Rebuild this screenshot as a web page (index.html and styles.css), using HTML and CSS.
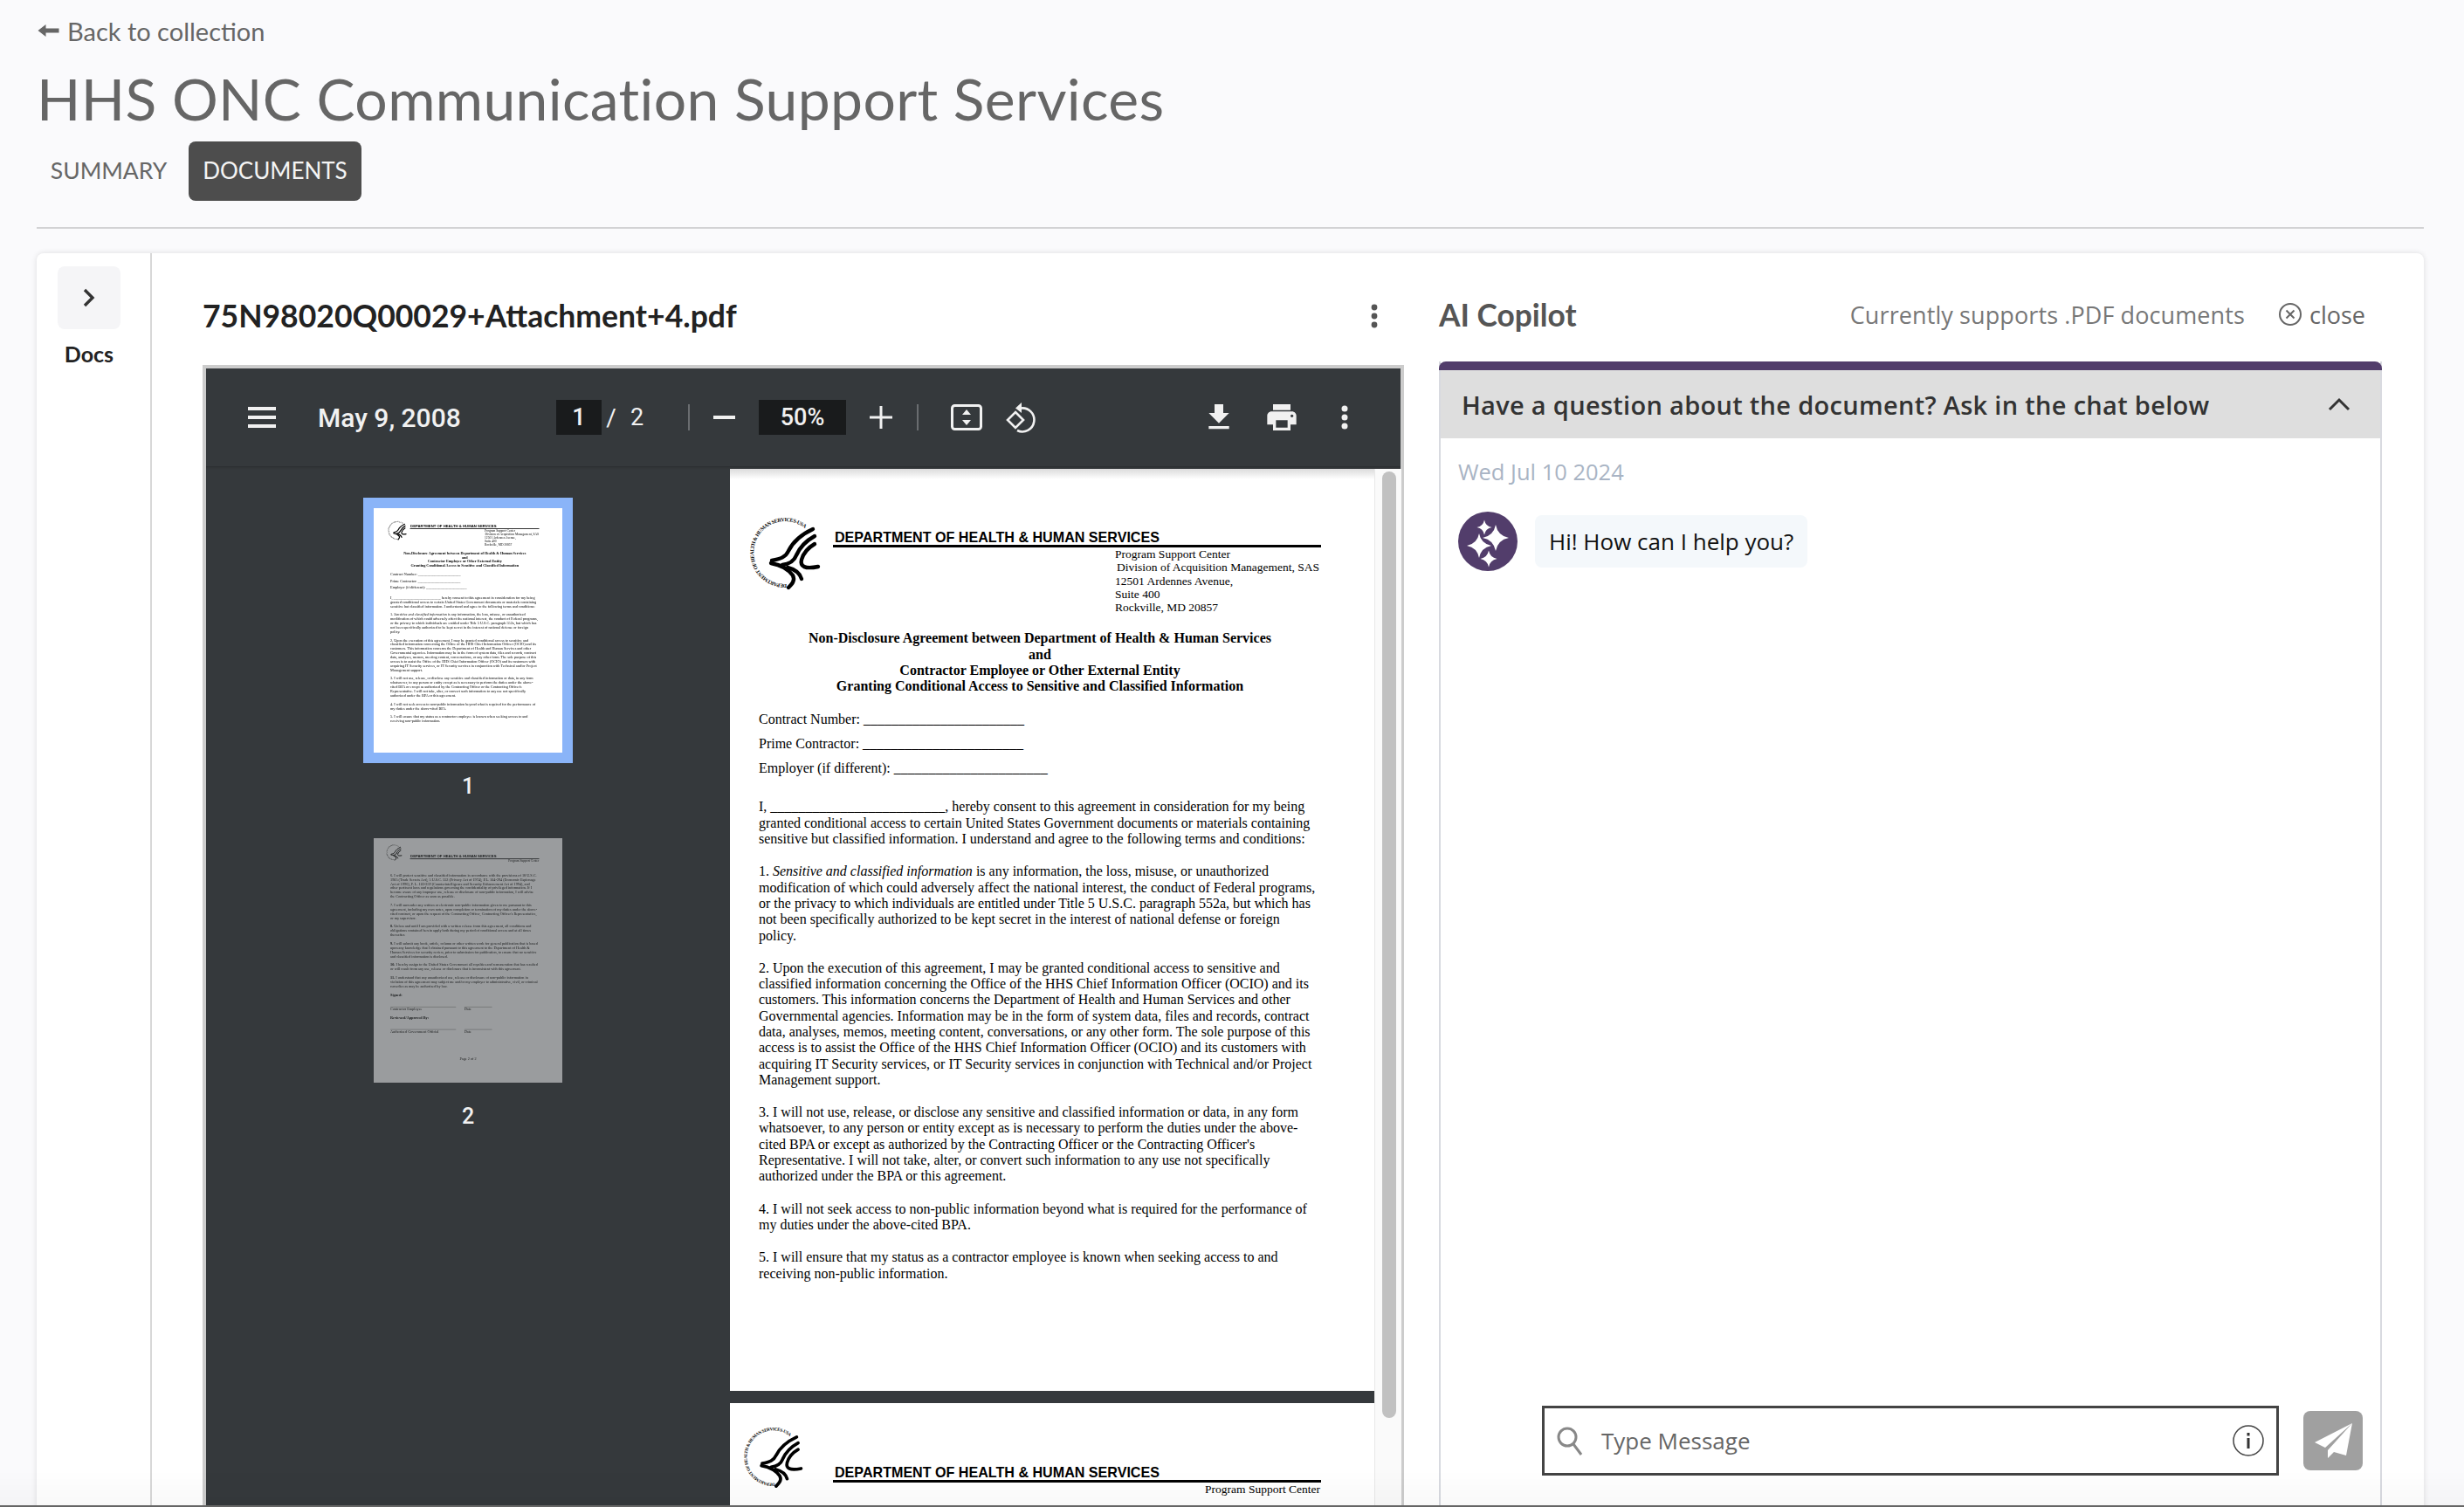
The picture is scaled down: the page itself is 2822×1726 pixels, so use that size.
FILE: index.html
```html
<!DOCTYPE html>
<html lang="en">
<head>
<meta charset="utf-8">
<title>HHS ONC Communication Support Services</title>
<link rel="stylesheet" href="styles.css">
</head>
<body>
<svg class="defs" width="0" height="0" aria-hidden="true">
  <defs>
    <symbol id="hhs" viewBox="0 0 100 100">
      <path id="hhs-ring" d="M55 89A36 36 0 1 1 77 26" fill="none"/>
      <text class="hhs-ring-text"><textPath href="#hhs-ring" textLength="139">DEPARTMENT OF HEALTH &amp; HUMAN SERVICES-USA</textPath></text>
      <g fill="none" stroke="#000" stroke-width="4.4" stroke-linecap="round">
        <path d="M85 26C72 32 62 41 57 51C54 58 48 60 38 62"/>
        <path d="M87 34C76 40 70 47 66 56C63 64 57 66 50 67"/>
        <path d="M87 43C80 47 74 54 72 61C70 69 76 72 91 69"/>
        <path d="M37 65C48 67 57 72 62 79C65 85 61 89 57 93"/>
        <path d="M56 70C64 72 70 76 72 83"/>
      </g>
    </symbol>
    <path id="star" d="M0-10Q1.6-1.6 10 0Q1.6 1.6 0 10Q-1.6 1.6-10 0Q-1.6-1.6 0-10Z" fill="#fff"/>
  </defs>
</svg>

<div class="page">
  <a class="back"><svg class="back-arrow" viewBox="0 0 24 16"><path d="M0 8L9 1V5.500H24V10.500H9V15Z" fill="#666"/></svg>Back to collection</a>
  <h1 class="title">HHS ONC Communication Support Services</h1>
  <nav class="tabs">
    <span class="tab">SUMMARY</span>
    <span class="tab tab-active">DOCUMENTS</span>
  </nav>
  <hr class="divider">

  <section class="card">
    <aside class="rail">
      <button class="rail-btn"><svg width="18" height="24" viewBox="0 0 18 24"><path d="M4 3L13 12L4 21" fill="none" stroke="#333" stroke-width="3.400"/></svg></button>
      <span class="rail-label">Docs</span>
    </aside>

    <div class="doc-col">
      <header class="doc-head">
        <span class="doc-name">75N98020Q00029+Attachment+4.pdf</span>
        <svg class="doc-more" width="8" height="28" viewBox="0 0 8 28"><circle cx="4" cy="4" r="3.4" fill="#555"/><circle cx="4" cy="14" r="3.4" fill="#555"/><circle cx="4" cy="24" r="3.4" fill="#555"/></svg>
      </header>

      <div class="viewer">
        <div class="toolbar">
          <svg class="tb-menu" width="32" height="24" viewBox="0 0 32 24"><path d="M0 0H32V4H0ZM0 10H32V14H0ZM0 20H32V24H0Z" fill="#f1f1f1"/></svg>
          <span class="tb-date">May 9, 2008</span>
          <span class="tb-box tb-pagebox">1</span>
          <span class="tb-slash">/</span>
          <span class="tb-total">2</span>
          <span class="tb-sep tb-sep-a"></span>
          <svg class="tb-minus" width="25" height="4" viewBox="0 0 25 4"><rect width="25" height="4" fill="#f1f1f1"/></svg>
          <span class="tb-box tb-zoombox">50%</span>
          <svg class="tb-plus" width="26" height="26" viewBox="0 0 26 26"><path d="M11.500 0H14.500V11.500H26V14.500H14.500V26H11.500V14.500H0V11.500H11.500Z" fill="#f1f1f1"/></svg>
          <span class="tb-sep tb-sep-b"></span>
          <svg class="tb-fit" width="36" height="30" viewBox="0 0 36 30"><rect x="1.500" y="1.500" width="33" height="27" rx="3" fill="none" stroke="#f1f1f1" stroke-width="3"/><path d="M18 6L23 12H13ZM18 24L13 18H23Z" fill="#f1f1f1"/></svg>
          <svg class="tb-rotate" width="36" height="36" viewBox="0 0 36 36"><path d="M11 12L20 21L11 30L2 21Z" fill="none" stroke="#f1f1f1" stroke-width="2.600"/><path d="M17 7.500A13.500 13.500 0 1 1 13 33" fill="none" stroke="#f1f1f1" stroke-width="2.600"/><path d="M18 1V13L11 7.500Z" fill="#f1f1f1"/></svg>
          <svg class="tb-dl" width="40" height="40" viewBox="0 0 24 24"><path d="M19 9h-4V3H9v6H5l7 7 7-7zM5 18v2h14v-2H5z" fill="#f1f1f1"/></svg>
          <svg class="tb-print" width="40" height="40" viewBox="0 0 24 24"><path d="M19 8H5c-1.660 0-3 1.340-3 3v6h4v4h12v-4h4v-6c0-1.660-1.340-3-3-3zm-3 11H8v-5h8v5zm3-7c-.550 0-1-.450-1-1s.450-1 1-1 1 .450 1 1-.450 1-1 1zm-1-9H6v4h12V3z" fill="#f1f1f1"/></svg>
          <svg class="tb-more" width="8" height="28" viewBox="0 0 8 28"><circle cx="4" cy="4" r="3.500" fill="#f1f1f1"/><circle cx="4" cy="14" r="3.500" fill="#f1f1f1"/><circle cx="4" cy="24" r="3.500" fill="#f1f1f1"/></svg>
        </div>

        <div class="viewer-body">
          <div class="thumbs">
            <div class="thumb thumb-selected">
              <div class="thumb-paper">
                <div class="thumb-scale">
                  <div class="sheet">
                    <div class="letterhead">
                      <svg class="hhs-logo"><use href="#hhs"/></svg>
                      <div class="dept">DEPARTMENT OF HEALTH &amp; HUMAN SERVICES</div>
                    </div>
                    <div class="address">Program Support Center<br><span class="address-indent">Division of Acquisition Management, SAS</span><br>12501 Ardennes Avenue,<br>Suite 400<br>Rockville, MD 20857</div>
                    <div class="agreement">Non-Disclosure Agreement between Department of Health &amp; Human Services<br>and<br>Contractor Employee or Other External Entity<br>Granting Conditional Access to Sensitive and Classified Information</div>
                    <div class="fields">Contract Number: _______________________<br>Prime Contractor: _______________________<br>Employer (if different): ______________________</div>
                    <p class="para para-first">I, _________________________, hereby consent to this agreement in consideration for my being<br>granted conditional access to certain United States Government documents or materials containing<br>sensitive but classified information. I understand and agree to the following terms and conditions:</p>
                    <p class="para">1. <i>Sensitive and classified information</i> is any information, the loss, misuse, or unauthorized<br>modification of which could adversely affect the national interest, the conduct of Federal programs,<br>or the privacy to which individuals are entitled under Title 5 U.S.C. paragraph 552a, but which has<br>not been specifically authorized to be kept secret in the interest of national defense or foreign<br>policy.</p>
                    <p class="para">2. Upon the execution of this agreement, I may be granted conditional access to sensitive and<br>classified information concerning the Office of the HHS Chief Information Officer (OCIO) and its<br>customers. This information concerns the Department of Health and Human Services and other<br>Governmental agencies. Information may be in the form of system data, files and records, contract<br>data, analyses, memos, meeting content, conversations, or any other form. The sole purpose of this<br>access is to assist the Office of the HHS Chief Information Officer (OCIO) and its customers with<br>acquiring IT Security services, or IT Security services in conjunction with Technical and/or Project<br>Management support.</p>
                    <p class="para">3. I will not use, release, or disclose any sensitive and classified information or data, in any form<br>whatsoever, to any person or entity except as is necessary to perform the duties under the above-<br>cited BPA or except as authorized by the Contracting Officer or the Contracting Officer's<br>Representative. I will not take, alter, or convert such information to any use not specifically<br>authorized under the BPA or this agreement.</p>
                    <p class="para">4. I will not seek access to non-public information beyond what is required for the performance of<br>my duties under the above-cited BPA.</p>
                    <p class="para">5. I will ensure that my status as a contractor employee is known when seeking access to and<br>receiving non-public information.</p>
                  </div>
                </div>
              </div>
            </div>
            <div class="thumb-label">1</div>
            <div class="thumb thumb-dim">
              <div class="thumb-paper">
                <div class="thumb-scale">
                  <div class="sheet">
                    <div class="letterhead letterhead-two">
                      <svg class="hhs-logo hhs-logo-two"><use href="#hhs"/></svg>
                      <div class="dept">DEPARTMENT OF HEALTH &amp; HUMAN SERVICES</div>
                    </div>
                    <div class="psc-right">Program Support Center</div>
                    <p class="para para-six">6. I will protect sensitive and classified information in accordance with the provisions of 18 U.S.C.<br>1905 (Trade Secrets Act), 5 U.S.C. 552 (Privacy Act of 1974), P.L. 104-294 (Economic Espionage<br>Act of 1996), P. L. 103-359 (Counterintelligence and Security Enhancement Act of 1994), and<br>other pertinent laws and regulations governing the confidentiality of privileged information. If I<br>become aware of any improper use, release or disclosure of non-public information, I will advise<br>the Contracting Officer as soon as possible.</p>
                    <p class="para">7. I will surrender any written or electronic non-public information given to me pursuant to this<br>agreement, including my own notes, upon completion or termination of my duties under the above-<br>cited contract, or upon the request of the Contracting Officer, Contracting Officer's Representative,<br>or my supervisor.</p>
                    <p class="para"><b>8.</b> Unless and until I am provided with a written release from this agreement, all conditions and<br>obligations contained herein apply both during my period of conditional access and at all times<br>thereafter.</p>
                    <p class="para"><b>9.</b> I will submit any book, article, column or other written work for general publication that is based<br>upon any knowledge that I obtained pursuant to this agreement to the Department of Health &amp;<br>Human Services for security review, prior to submission for publication, to ensure that no sensitive<br>and classified information is disclosed.</p>
                    <p class="para"><b>10.</b> I hereby assign to the United States Government all royalties and remuneration that has resulted<br>or will result from any use, release or disclosure that is inconsistent with this agreement.</p>
                    <p class="para"><b>11.</b> I understand that any unauthorized use, release or disclosure of non-public information in<br>violation of this agreement may subject me and/or my employer to administrative, civil, or criminal<br>remedies as may be authorized by law.</p>
                    <p class="para"><b>Signed:</b></p>
                    <div class="sign-row"><span class="sign-name">Contractor Employee</span><span class="sign-date">Date</span></div>
                    <p class="para"><b>Reviewed/Approved By:</b></p>
                    <div class="sign-row"><span class="sign-name">Authorized Government Official</span><span class="sign-date">Date</span></div>
                    <div class="page-no">Page 2 of 2</div>
                  </div>
                </div>
              </div>
            </div>
            <div class="thumb-label">2</div>
          </div>

          <div class="pages">
            <div class="pages-scroll">
              <div class="sheet sheet-main">
                <div class="letterhead">
                  <svg class="hhs-logo"><use href="#hhs"/></svg>
                  <div class="dept">DEPARTMENT OF HEALTH &amp; HUMAN SERVICES</div>
                </div>
                <div class="address">Program Support Center<br><span class="address-indent">Division of Acquisition Management, SAS</span><br>12501 Ardennes Avenue,<br>Suite 400<br>Rockville, MD 20857</div>
                <div class="agreement">Non-Disclosure Agreement between Department of Health &amp; Human Services<br>and<br>Contractor Employee or Other External Entity<br>Granting Conditional Access to Sensitive and Classified Information</div>
                <div class="fields">Contract Number: _______________________<br>Prime Contractor: _______________________<br>Employer (if different): ______________________</div>
                <p class="para para-first">I, _________________________, hereby consent to this agreement in consideration for my being<br>granted conditional access to certain United States Government documents or materials containing<br>sensitive but classified information. I understand and agree to the following terms and conditions:</p>
                <p class="para">1. <i>Sensitive and classified information</i> is any information, the loss, misuse, or unauthorized<br>modification of which could adversely affect the national interest, the conduct of Federal programs,<br>or the privacy to which individuals are entitled under Title 5 U.S.C. paragraph 552a, but which has<br>not been specifically authorized to be kept secret in the interest of national defense or foreign<br>policy.</p>
                <p class="para">2. Upon the execution of this agreement, I may be granted conditional access to sensitive and<br>classified information concerning the Office of the HHS Chief Information Officer (OCIO) and its<br>customers. This information concerns the Department of Health and Human Services and other<br>Governmental agencies. Information may be in the form of system data, files and records, contract<br>data, analyses, memos, meeting content, conversations, or any other form. The sole purpose of this<br>access is to assist the Office of the HHS Chief Information Officer (OCIO) and its customers with<br>acquiring IT Security services, or IT Security services in conjunction with Technical and/or Project<br>Management support.</p>
                <p class="para">3. I will not use, release, or disclose any sensitive and classified information or data, in any form<br>whatsoever, to any person or entity except as is necessary to perform the duties under the above-<br>cited BPA or except as authorized by the Contracting Officer or the Contracting Officer's<br>Representative. I will not take, alter, or convert such information to any use not specifically<br>authorized under the BPA or this agreement.</p>
                <p class="para">4. I will not seek access to non-public information beyond what is required for the performance of<br>my duties under the above-cited BPA.</p>
                <p class="para">5. I will ensure that my status as a contractor employee is known when seeking access to and<br>receiving non-public information.</p>
              </div>
              <div class="sheet sheet-main sheet-next">
                <div class="letterhead letterhead-two">
                  <svg class="hhs-logo hhs-logo-two"><use href="#hhs"/></svg>
                  <div class="dept">DEPARTMENT OF HEALTH &amp; HUMAN SERVICES</div>
                </div>
                <div class="psc-right">Program Support Center</div>
              </div>
            </div>
            <div class="gutter"><div class="gutter-thumb"></div></div>
          </div>
        </div>
      </div>
    </div>

    <div class="chat-col">
      <header class="chat-head">
        <span class="chat-title">AI Copilot</span>
        <span class="chat-note">Currently supports .PDF documents</span>
        <span class="chat-close"><svg width="28" height="28" viewBox="0 0 28 28"><circle cx="14" cy="14" r="12" fill="none" stroke="#666" stroke-width="2"/><path d="M9.500 9.500L18.500 18.500M18.500 9.500L9.500 18.500" stroke="#666" stroke-width="2"/></svg>close</span>
      </header>
      <div class="chat-panel">
        <div class="chat-bar"></div>
        <div class="chat-q">
          <span class="chat-q-text">Have a question about the document? Ask in the chat below</span>
          <svg width="26" height="16" viewBox="0 0 26 16"><path d="M2 14L13 3L24 14" fill="none" stroke="#333" stroke-width="3"/></svg>
        </div>
        <div class="chat-body">
          <div class="chat-date">Wed Jul 10 2024</div>
          <div class="msg">
            <svg class="avatar" viewBox="0 0 68 68"><circle cx="34" cy="34" r="34" fill="#523d6b"/><use href="#star" transform="translate(30 18) scale(.85)"/><use href="#star" transform="translate(43 30) scale(1.5)"/><use href="#star" transform="translate(24 39) scale(1.4)"/><use href="#star" transform="translate(35 54) scale(.95)"/></svg>
            <span class="bubble">Hi! How can I help you?</span>
          </div>
        </div>
        <div class="composer">
          <div class="input">
            <svg class="input-search" width="32" height="36" viewBox="0 0 32 36"><circle cx="13" cy="14" r="10" fill="none" stroke="#888" stroke-width="3"/><path d="M20 22L29 34" stroke="#888" stroke-width="3"/></svg>
            <span class="input-text">Type Message</span>
            <svg class="input-info" width="36" height="36" viewBox="0 0 36 36"><circle cx="18" cy="18" r="17" fill="none" stroke="#444" stroke-width="1.500"/><rect x="16.500" y="15" width="3" height="12" fill="#333"/><rect x="16.500" y="9" width="3" height="3.500" fill="#333"/></svg>
          </div>
          <button class="send"><svg width="43" height="40" viewBox="0 0 43 40"><path d="M43 0L0 22L12 28ZM43 0L15 31V40L22 33L36 37Z" fill="#fff"/></svg></button>
        </div>
      </div>
    </div>
  </section>
</div>
<div class="bottom-fade"></div>
</body>
</html>
```
FILE: styles.css
```css
* { box-sizing: border-box; }
html, body { margin: 0; height: 1726px; overflow: hidden; }
body { background: #fafafc; font-family: "Lato", "Open Sans", sans-serif; color: #666; }
.defs { position: absolute; }
.hhs-ring-text { font: 700 6px "Liberation Serif", serif; fill: #000; }

.page { padding: 0 46px 0 42px; }
.back { display: flex; align-items: center; height: 36px; margin-top: 17px; padding-left: 1px; font-size: 29px; color: #666; }
.back-arrow { width: 25px; height: 16px; margin-right: 9px; }
.title { margin: 24px 0 0; height: 72px; font-size: 66px; line-height: 72px; font-weight: 400; color: #666; letter-spacing: .36px; font-variant-ligatures: none; white-space: nowrap; }
.tabs { display: flex; height: 68px; margin-top: 13px; }
.tab { display: flex; align-items: center; justify-content: center; height: 68px; width: 165px; margin-right: 9px; padding-bottom: 2px; font-size: 26.500px; color: #666; }
.tab-active { width: 198px; margin-right: 0; font-size: 26px; background: #4d4d4d; color: #f4f4f4; border-radius: 8px; }
.divider { margin: 30px 0 28px; height: 2px; border: 0; background: #d2d2d4; }

.card { display: flex; height: 1500px; background: #fff; border-radius: 8px 8px 0 0; box-shadow: 0 0 6px rgba(0,0,0,.12); }
.rail { display: flex; flex-direction: column; align-items: center; flex: none; width: 132px; padding: 15px 10px 0 0; border-right: 2px solid #d8d8d8; }
.rail-btn { display: flex; align-items: center; justify-content: center; width: 72px; height: 72px; padding: 0; border: 0; border-radius: 8px; background: #f5f5f7; }
.rail-label { margin-top: 14px; font-size: 25px; line-height: 28px; font-weight: 700; color: #222; }

.doc-col { flex: none; width: 1376px; margin-left: 58px; padding-top: 43px; }
.doc-head { display: flex; align-items: center; justify-content: space-between; height: 56px; padding-right: 30px; }
.doc-name { font-size: 35.500px; font-weight: 700; color: #222; }
.doc-more { margin-top: 2px; }
.viewer { margin-top: 29px; height: 1400px; border: 4px solid #ccc; background: #35393c; font-family: "Roboto", sans-serif; color: #f1f1f1; }

.toolbar { display: flex; align-items: center; height: 112px; }
.toolbar svg { flex: none; display: block; }
.tb-menu { margin-left: 48px; }
.tb-date { width: 163px; margin-left: 48px; font-size: 30px; font-weight: 500; white-space: nowrap; }
.tb-box { display: flex; align-items: center; justify-content: center; height: 40px; background: #191b1c; font-size: 27px; font-weight: 500; }
.tb-pagebox { width: 52px; margin-left: 110px; }
.tb-slash { width: 18px; margin-left: 2px; text-align: center; font-size: 28px; }
.tb-total { width: 16px; margin-left: 13px; font-size: 27px; }
.tb-sep { flex: none; width: 2px; height: 30px; background: #6a6d70; }
.tb-sep-a { margin-left: 50px; }
.tb-minus { margin-left: 27px; }
.tb-zoombox { width: 100px; margin-left: 27px; }
.tb-plus { margin-left: 27px; }
.tb-sep-b { margin-left: 28px; }
.tb-fit { margin-left: 37px; }
.tb-rotate { margin-left: 27px; }
.tb-dl { margin-left: 188px; }
.tb-print { margin-left: 32px; }
.tb-more { margin-left: 48px; }

.viewer-body { display: flex; height: 1280px; box-shadow: inset 0 3px 3px -2px rgba(0,0,0,.25); }
.thumbs { display: flex; flex-direction: column; align-items: center; flex: none; width: 600px; padding-top: 36px; }
.thumb { width: 240px; height: 304px; border: 12px solid transparent; }
.thumb-selected { border-color: #8ab4f8; }
.thumb-dim { opacity: .5; }
.thumb-paper { width: 216px; height: 280px; overflow: hidden; background: #fff; }
.thumb-scale { width: 816px; height: 1056px; padding-left: 39px; transform: scale(.2647); transform-origin: 0 0; filter: blur(.9px); }
.thumb-label { height: 52px; margin-bottom: 22px; padding-top: 14px; font-size: 25px; line-height: 26px; font-weight: 500; color: #f1f1f1; }

.pages { display: flex; flex: 1; padding-top: 3px; min-width: 0; }
.pages-scroll { position: relative; flex: none; width: 738px; overflow: hidden; }
.pages-scroll::before { content: ""; position: absolute; z-index: 1; top: 0; left: 0; right: 0; height: 12px; background: linear-gradient(rgba(0,0,0,.14), rgba(0,0,0,0)); }
.gutter { flex: 1; padding: 3px 6px 0 8px; background: #fafafa; border-left: 1px solid #e8e8e8; }
.gutter-thumb { width: 16px; height: 1084px; border-radius: 8px; background: #c1c1c1; }

.sheet { width: 738px; height: 1056px; background: #fff; font-family: "Liberation Serif", serif; font-size: 16px; line-height: 18.300px; color: #000; }
.sheet-next { margin-top: 14px; }
.letterhead { position: relative; height: 90px; padding: 71px 0 0 118px; }
.letterhead-two { height: 91px; padding-top: 72px; }
.hhs-logo { position: absolute; top: 43px; left: 10px; width: 100px; height: 100px; }
.hhs-logo-two { top: 17px; left: 5px; width: 84px; height: 84px; }
.dept { width: 559px; height: 19px; padding-left: 2px; border-bottom: 3px solid #000; font: 700 16.100px/15px "Liberation Sans", sans-serif; white-space: nowrap; }
.address { margin: 0 0 0 441px; font-size: 13.500px; line-height: 15.250px; white-space: nowrap; }
.address-indent { margin-left: 2px; }
.agreement { width: 710px; margin-top: 19px; font-weight: 700; text-align: center; white-space: nowrap; }
.fields { margin: 15px 0 0 33px; line-height: 28px; white-space: nowrap; }
.para { margin: 19px 0 0 33px; white-space: nowrap; }
.para-first { margin-top: 21px; }
.para-six { margin-top: 45px; }
.psc-right { padding-right: 62px; height: 16px; text-align: right; font-size: 13.500px; line-height: 16px; }
.sign-row { display: flex; margin: 42px 0 0 33px; }
.sign-name { width: 284px; border-top: 1px solid #000; }
.sign-date { width: 120px; margin-left: 36px; border-top: 1px solid #000; }
.page-no { margin-top: 100px; text-align: center; }

.chat-col { flex: none; width: 1080px; margin-left: 40px; padding-top: 42px; }
.chat-head { display: flex; align-items: center; height: 56px; font-family: "Open Sans", sans-serif; }
.chat-title { font: 700 35.300px "Lato", sans-serif; color: #555; }
.chat-note { margin-left: auto; font-size: 27px; letter-spacing: .1px; color: #777; }
.chat-close { display: flex; align-items: center; gap: 8px; margin-left: 38px; margin-right: 19px; font-size: 27px; color: #666; }
.chat-panel { display: flex; flex-direction: column; height: 1312px; margin-top: 26px; font-family: "Open Sans", sans-serif; border-right: 2px solid #d8dae0; border-left: 2px solid #d8dae0; }
.chat-bar { height: 10px; margin: 0 -2px; background: #523d6b; border-radius: 8px 8px 0 0; }
.chat-q { display: flex; align-items: center; justify-content: space-between; height: 78px; padding: 0 34px 0 24px; background: #dedede; }
.chat-q-text { font-size: 29px; font-weight: 600; color: #333; letter-spacing: .3px; }
.chat-body { flex: 1; padding: 22px 20px 0; }
.chat-date { height: 32px; font-size: 25.500px; line-height: 32px; color: #a9b4c4; }
.msg { display: flex; align-items: center; gap: 20px; margin-top: 30px; }
.avatar { flex: none; width: 68px; height: 68px; }
.bubble { display: flex; align-items: center; height: 60px; padding: 0 16px; background: #f4f8fb; border-radius: 8px; font-size: 26px; color: #111; }
.composer { display: flex; align-items: center; height: 116px; padding: 0 20px 36px 116px; }
.input { display: flex; align-items: center; width: 844px; height: 80px; padding: 0 14px 0 13px; border: 3px solid #444; background: #fff; }
.input-text { flex: 1; margin-left: 20px; font-size: 26px; color: #666; }
.send { display: flex; align-items: center; justify-content: center; width: 68px; height: 68px; margin-left: 28px; padding: 0; border: 0; border-radius: 8px; background: #a0a0a0; }

.bottom-fade { position: fixed; left: 0; right: 0; bottom: 0; height: 42px; border-bottom: 2px solid #666; background: linear-gradient(rgba(0,0,0,0), rgba(0,0,0,.025)); pointer-events: none; }
```
